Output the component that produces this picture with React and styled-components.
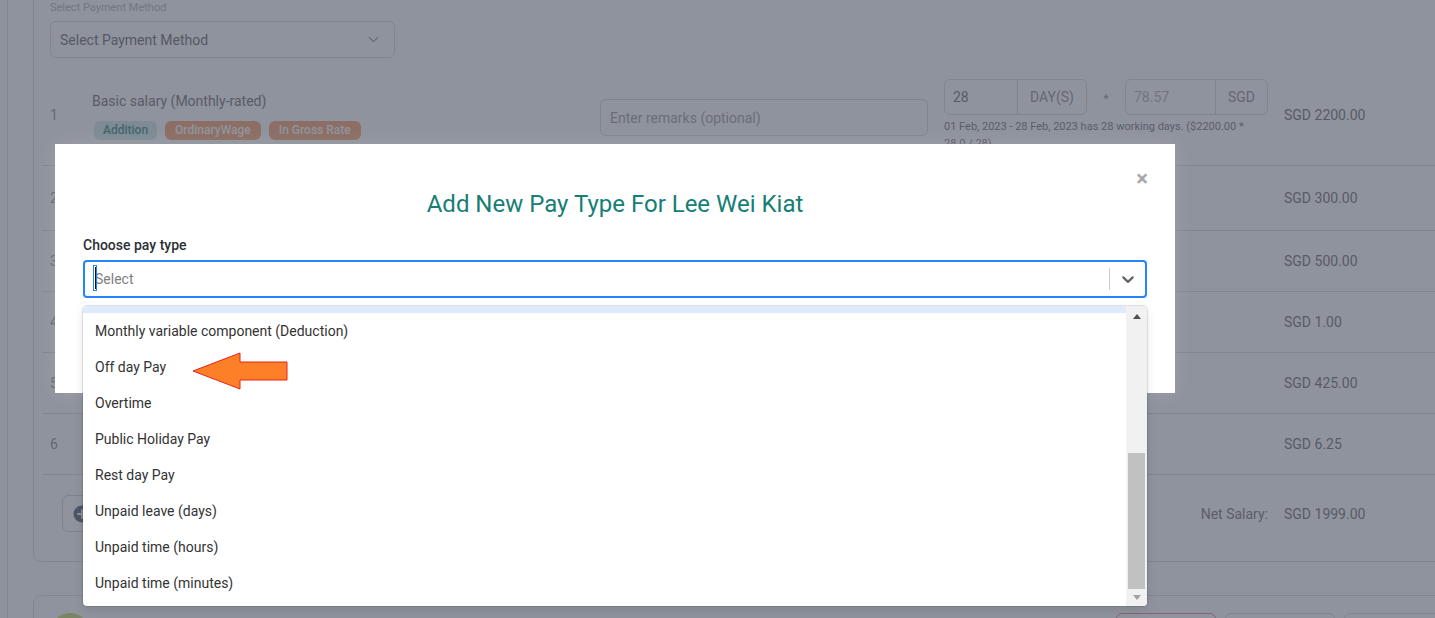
import React, { useLayoutEffect, useRef } from "react";
import styled, { createGlobalStyle } from "styled-components";
import { ChevronDown } from "lucide-react";

const GlobalStyle = createGlobalStyle`
  html, body { margin: 0; padding: 0; }
  body {
    font-family: Roboto, "Liberation Sans", Arial, sans-serif;
    background: #fff;
    overflow: hidden;
  }
  * { box-sizing: border-box; }
`;

const Screen = styled.div`
  position: relative;
  width: 1435px;
  height: 618px;
  overflow: hidden;
  display: flex;
  background: #fff;
`;

const Rail = styled.div`
  width: 8px;
  flex: none;
  border-right: 1px solid #e4e4e4;
`;

const Main = styled.div`
  flex: 1;
  min-width: 0;
  padding-left: 25px;
  display: flex;
  flex-direction: column;
`;

const Card = styled.div`
  margin-top: -10px;
  margin-right: -40px;
  height: 572px;
  border: 1px solid #e4e4e4;
  border-radius: 8px;
  padding: 9px 0 0 8px;
  display: flex;
  flex-direction: column;
`;

const PaymentBlock = styled.div`
  padding-left: 8px;
  display: flex;
  flex-direction: column;
`;

const SmallLabel = styled.div`
  font-size: 11px;
  line-height: 15px;
  color: #c6c6c6;
`;

const PaySelect = styled.div`
  margin-top: 6px;
  width: 345px;
  height: 37px;
  border: 1px solid #e2e2e2;
  border-radius: 6px;
  padding: 0 12px 0 9px;
  display: flex;
  align-items: center;
  justify-content: space-between;
  font-size: 14px;
  color: #8a8a8a;
`;

const Row = styled.div`
  display: grid;
  grid-template-columns: 42px 508px 344px 340px 1fr;
  align-items: center;
  height: ${(p) => p.$h}px;
  padding: ${(p) => p.$pt || 0}px 0 0 8px;
  border-bottom: 1px solid #e4e4e4;
  font-size: 14px;
  color: #8f8f8f;
`;

const Num = styled.div`
  color: #aaaaaa;
  font-size: 14px;
`;

const NameBlock = styled.div`
  display: flex;
  flex-direction: column;
  gap: 10px;
`;

const ItemName = styled.div`
  font-size: 14px;
  line-height: 20px;
  color: #8f8f8f;
`;

const Badges = styled.div`
  display: flex;
  gap: 8px;
  padding-left: 2px;
`;

const Badge = styled.span`
  height: 19px;
  line-height: 19px;
  padding: 0 ${(p) => (p.$tone === "teal" ? 9 : 10)}px;
  border-radius: 6px;
  font-size: 12px;
  font-weight: 500;
  background: ${(p) => (p.$tone === "teal" ? "#dceeed" : "#f9b58c")};
  color: ${(p) => (p.$tone === "teal" ? "#64a39b" : "#ffffff")};
`;

const RemarkInput = styled.div`
  width: 328px;
  height: 37px;
  border: 1px solid #e2e2e2;
  border-radius: 6px;
  padding: 0 9px;
  display: flex;
  align-items: center;
  font-size: 14px;
  color: #b4b4b4;
  margin-top: 5px;
`;

const QtyBlock = styled.div`
  display: flex;
  flex-direction: column;
`;

const QtyLine = styled.div`
  display: flex;
  align-items: center;
`;

const InputGroup = styled.div`
  display: flex;
  height: 36px;
  border: 1px solid #e2e2e2;
  border-radius: 6px;
  font-size: 14px;
`;

const GroupField = styled.div`
  width: ${(p) => p.$w}px;
  display: flex;
  align-items: center;
  padding-left: 8px;
  color: ${(p) => (p.$muted ? "#c4c4c4" : "#8f8f8f")};
`;

const GroupAddon = styled.div`
  width: ${(p) => p.$w}px;
  border-left: 1px solid #e2e2e2;
  display: flex;
  align-items: center;
  justify-content: center;
  color: #a8a8a8;
`;

const Times = styled.div`
  width: 38px;
  text-align: center;
  color: #b0b0b0;
  font-size: 13px;
  padding-top: 4px;
`;

const Note = styled.div`
  margin-top: 3px;
  font-size: 11px;
  line-height: 17px;
  color: #959595;
  white-space: nowrap;
`;

const Amount = styled.div`
  font-size: 14px;
  color: #8f8f8f;
`;

const FooterRow = styled.div`
  display: grid;
  grid-template-columns: 882px 340px 1fr;
  align-items: center;
  height: 86px;
  padding: 20px 0 29px 20px;
`;

const OutlineButton = styled.div`
  width: 170px;
  height: 37px;
  border: 1px solid #dedede;
  border-radius: 6px;
  display: flex;
  align-items: center;
  gap: 8px;
  padding-left: 10px;
  font-size: 14px;
  color: #8f8f8f;
`;

const NetLabel = styled.div`
  text-align: right;
  padding-right: 16px;
  font-size: 14px;
  color: #959595;
`;

const Card2 = styled.div`
  margin-top: 33px;
  margin-right: -40px;
  height: 80px;
  border: 1px solid #e4e4e4;
  border-radius: 8px;
  padding: 17px 30px 0 16px;
  display: flex;
  align-items: flex-start;
`;

const Avatar = styled.div`
  width: 40px;
  height: 40px;
  border-radius: 50%;
  background: #d3e28a;
`;

const ActionButtons = styled.div`
  margin-left: auto;
  display: flex;
  gap: 9px;
`;

const ActionButton = styled.div`
  width: ${(p) => p.$w}px;
  height: 36px;
  border: 1px solid ${(p) => (p.$danger ? "#f0a0a8" : "#e2e2e2")};
  border-radius: 6px;
`;

/* ---------- overlay ---------- */

const Backdrop = styled.div`
  position: absolute;
  inset: 0;
  background: rgba(31, 39, 59, 0.5);
`;

const Modal = styled.div`
  position: absolute;
  left: 55px;
  top: 144px;
  width: 1120px;
  height: 249px;
  background: #fff;
  padding: 46px 28px 0;
  box-shadow: 0 0 18px rgba(255, 255, 255, 0.12);
`;

const CloseButton = styled.div`
  position: absolute;
  top: 24px;
  right: 27px;
  font-size: 22px;
  line-height: 22px;
  font-weight: 700;
  color: #a9a9a9;
`;

const Title = styled.h2`
  margin: 0;
  text-align: center;
  font-size: 24px;
  line-height: 28px;
  font-weight: 400;
  color: #167e75;
`;

const FieldLabel = styled.div`
  margin-top: 17px;
  font-size: 14px;
  line-height: 20px;
  font-weight: 500;
  color: #2b2f36;
`;

const SelectWrap = styled.div`
  position: relative;
  margin-top: 5px;
`;

const Control = styled.div`
  height: 38px;
  border: 2px solid #2684ff;
  border-radius: 4px;
  display: flex;
  align-items: center;
`;

const ValueArea = styled.div`
  position: relative;
  flex: 1;
  padding: 0 8px 0 10px;
  font-size: 14px;
  color: #808080;
`;

const Caret = styled.span`
  position: absolute;
  left: 8px;
  top: -6px;
  width: 4px;
  height: 26px;
  border: 1px solid #2684ff;
  &::after {
    content: "";
    position: absolute;
    left: 1px;
    top: 1px;
    width: 1px;
    height: 22px;
    background: #111;
  }
`;

const Separator = styled.span`
  width: 1px;
  height: 22px;
  background: #cccccc;
`;

const Indicator = styled.div`
  width: 35px;
  display: flex;
  justify-content: center;
  color: #666;
`;

const Menu = styled.div`
  position: absolute;
  left: 0;
  right: 0;
  top: calc(100% + 8px);
  height: 300px;
  background: #fff;
  border-radius: 4px;
  box-shadow: 0 0 0 1px rgba(0, 0, 0, 0.1), 0 4px 11px rgba(0, 0, 0, 0.1);
  display: flex;
  overflow: hidden;
`;

const Viewport = styled.div`
  flex: 1;
  overflow: hidden;
`;

const OptionList = styled.div`
  padding: 4px 0 5px;
`;

const Option = styled.div`
  height: 36px;
  padding: 0 12px;
  display: flex;
  align-items: center;
  font-size: 14px;
  color: #333333;
  background: ${(p) => (p.$focused ? "#deebff" : "transparent")};
`;

const ScrollBar = styled.div`
  width: 21px;
  flex: none;
  background: #f1f1f1;
  display: flex;
  flex-direction: column;
`;

const ScrollArrow = styled.div`
  height: 17px;
  display: flex;
  align-items: center;
  justify-content: center;
  padding-top: ${(p) => (p.$dir === "up" ? 3 : 0)}px;
  &::before {
    content: "";
    width: 0;
    height: 0;
    border-left: 4.5px solid transparent;
    border-right: 4.5px solid transparent;
    ${(p) =>
      p.$dir === "up"
        ? `border-bottom: 5px solid #505050;`
        : `border-top: 5px solid #a3a3a3;`}
  }
`;

const Track = styled.div`
  flex: 1;
  padding: 0 2px;
`;

const Thumb = styled.div`
  background: #c1c1c1;
`;

const Pointer = styled.svg`
  position: absolute;
  left: 190px;
  top: 350px;
  width: 100px;
  height: 42px;
  overflow: visible;
`;

const options = [
  "Allowance",
  "Annual Wage Supplement",
  "Backpay",
  "Bonus",
  "Commission",
  "Director's Fee",
  "Incentive",
  "Monthly variable component (Addition)",
  "Monthly variable component (Deduction)",
  "Off day Pay",
  "Overtime",
  "Public Holiday Pay",
  "Rest day Pay",
  "Unpaid leave (days)",
  "Unpaid time (hours)",
  "Unpaid time (minutes)",
];

const otherRows = [
  { n: 2, h: 65, amt: "SGD 300.00" },
  { n: 3, h: 61, amt: "SGD 500.00" },
  { n: 4, h: 61, amt: "SGD 1.00" },
  { n: 5, h: 61, amt: "SGD 425.00" },
  { n: 6, h: 61, amt: "SGD 6.25" },
];

const SCROLL_TOP = 285;
const CONTENT_H = 4 + options.length * 36 + 5;
const TRACK_H = 300 - 34;

function FilledPlus() {
  return (
    <svg width="18" height="18" viewBox="0 0 18 18">
      <circle cx="9" cy="9" r="8.5" fill="#7b8493" />
      <path d="M9 5v8M5 9h8" stroke="#fff" strokeWidth="1.8" strokeLinecap="round" />
    </svg>
  );
}

export default function App() {
  const viewportRef = useRef(null);
  useLayoutEffect(() => {
    if (viewportRef.current) viewportRef.current.scrollTop = SCROLL_TOP;
  }, []);

  const thumbH = Math.round((300 / CONTENT_H) * TRACK_H);
  const thumbTop = Math.round((SCROLL_TOP / CONTENT_H) * TRACK_H);

  return (
    <Screen>
      <GlobalStyle />
      <Rail />
      <Main>
        <Card>
          <PaymentBlock>
            <SmallLabel>Select Payment Method</SmallLabel>
            <PaySelect>
              Select Payment Method
              <ChevronDown size={17} strokeWidth={1.5} color="#a6a6a6" />
            </PaySelect>
          </PaymentBlock>

          <Row $h={108} $pt={7}>
            <Num>1</Num>
            <NameBlock>
              <ItemName>Basic salary (Monthly-rated)</ItemName>
              <Badges>
                <Badge $tone="teal">Addition</Badge>
                <Badge>OrdinaryWage</Badge>
                <Badge>In Gross Rate</Badge>
              </Badges>
            </NameBlock>
            <RemarkInput>Enter remarks (optional)</RemarkInput>
            <QtyBlock>
              <QtyLine>
                <InputGroup>
                  <GroupField $w={72}>28</GroupField>
                  <GroupAddon $w={69}>DAY(S)</GroupAddon>
                </InputGroup>
                <Times>*</Times>
                <InputGroup>
                  <GroupField $w={89} $muted>
                    78.57
                  </GroupField>
                  <GroupAddon $w={52}>SGD</GroupAddon>
                </InputGroup>
              </QtyLine>
              <Note>
                01 Feb, 2023 - 28 Feb, 2023 has 28 working days. ($2200.00 *
                <br />
                28.0 / 28)
              </Note>
            </QtyBlock>
            <Amount>SGD 2200.00</Amount>
          </Row>

          {otherRows.map((r) => (
            <Row key={r.n} $h={r.h}>
              <Num>{r.n}</Num>
              <div />
              <div />
              <div />
              <Amount>{r.amt}</Amount>
            </Row>
          ))}

          <FooterRow>
            <OutlineButton>
              <FilledPlus />
              Add Pay Type
            </OutlineButton>
            <NetLabel>Net Salary:</NetLabel>
            <Amount>SGD 1999.00</Amount>
          </FooterRow>
        </Card>

        <Card2>
          <Avatar />
          <ActionButtons>
            <ActionButton $w={100} $danger />
            <ActionButton $w={110} />
            <ActionButton $w={100} />
          </ActionButtons>
        </Card2>
      </Main>

      <Backdrop />

      <Modal>
        <CloseButton>×</CloseButton>
        <Title>Add New Pay Type For Lee Wei Kiat</Title>
        <FieldLabel>Choose pay type</FieldLabel>
        <SelectWrap>
          <Control>
            <ValueArea>
              <Caret />
              Select
            </ValueArea>
            <Separator />
            <Indicator>
              <svg width="20" height="20" viewBox="0 0 20 20" fill="currentColor">
                <path d="M4.516 7.548c0.436-0.446 1.043-0.481 1.576 0l3.908 3.747 3.908-3.747c0.533-0.481 1.141-0.446 1.574 0 0.436 0.445 0.408 1.197 0 1.615-0.406 0.418-4.695 4.502-4.695 4.502-0.217 0.223-0.502 0.335-0.787 0.335s-0.57-0.112-0.789-0.335c0 0-4.287-4.084-4.695-4.502s-0.436-1.17 0-1.615z" />
              </svg>
            </Indicator>
          </Control>
          <Menu>
            <Viewport ref={viewportRef}>
              <OptionList>
                {options.map((o, i) => (
                  <Option key={o} $focused={i === 7}>
                    {o}
                  </Option>
                ))}
              </OptionList>
            </Viewport>
            <ScrollBar>
              <ScrollArrow $dir="up" />
              <Track>
                <Thumb style={{ marginTop: thumbTop, height: thumbH }} />
              </Track>
              <ScrollArrow $dir="down" />
            </ScrollBar>
          </Menu>
        </SelectWrap>
      </Modal>

      <Pointer viewBox="0 0 100 42">
        <polygon
          points="3,21 50,3 50,12 97,12 97,30 50,30 50,39"
          fill="#fd7f27"
          stroke="#e8231a"
          strokeWidth="1"
        />
      </Pointer>
    </Screen>
  );
}
